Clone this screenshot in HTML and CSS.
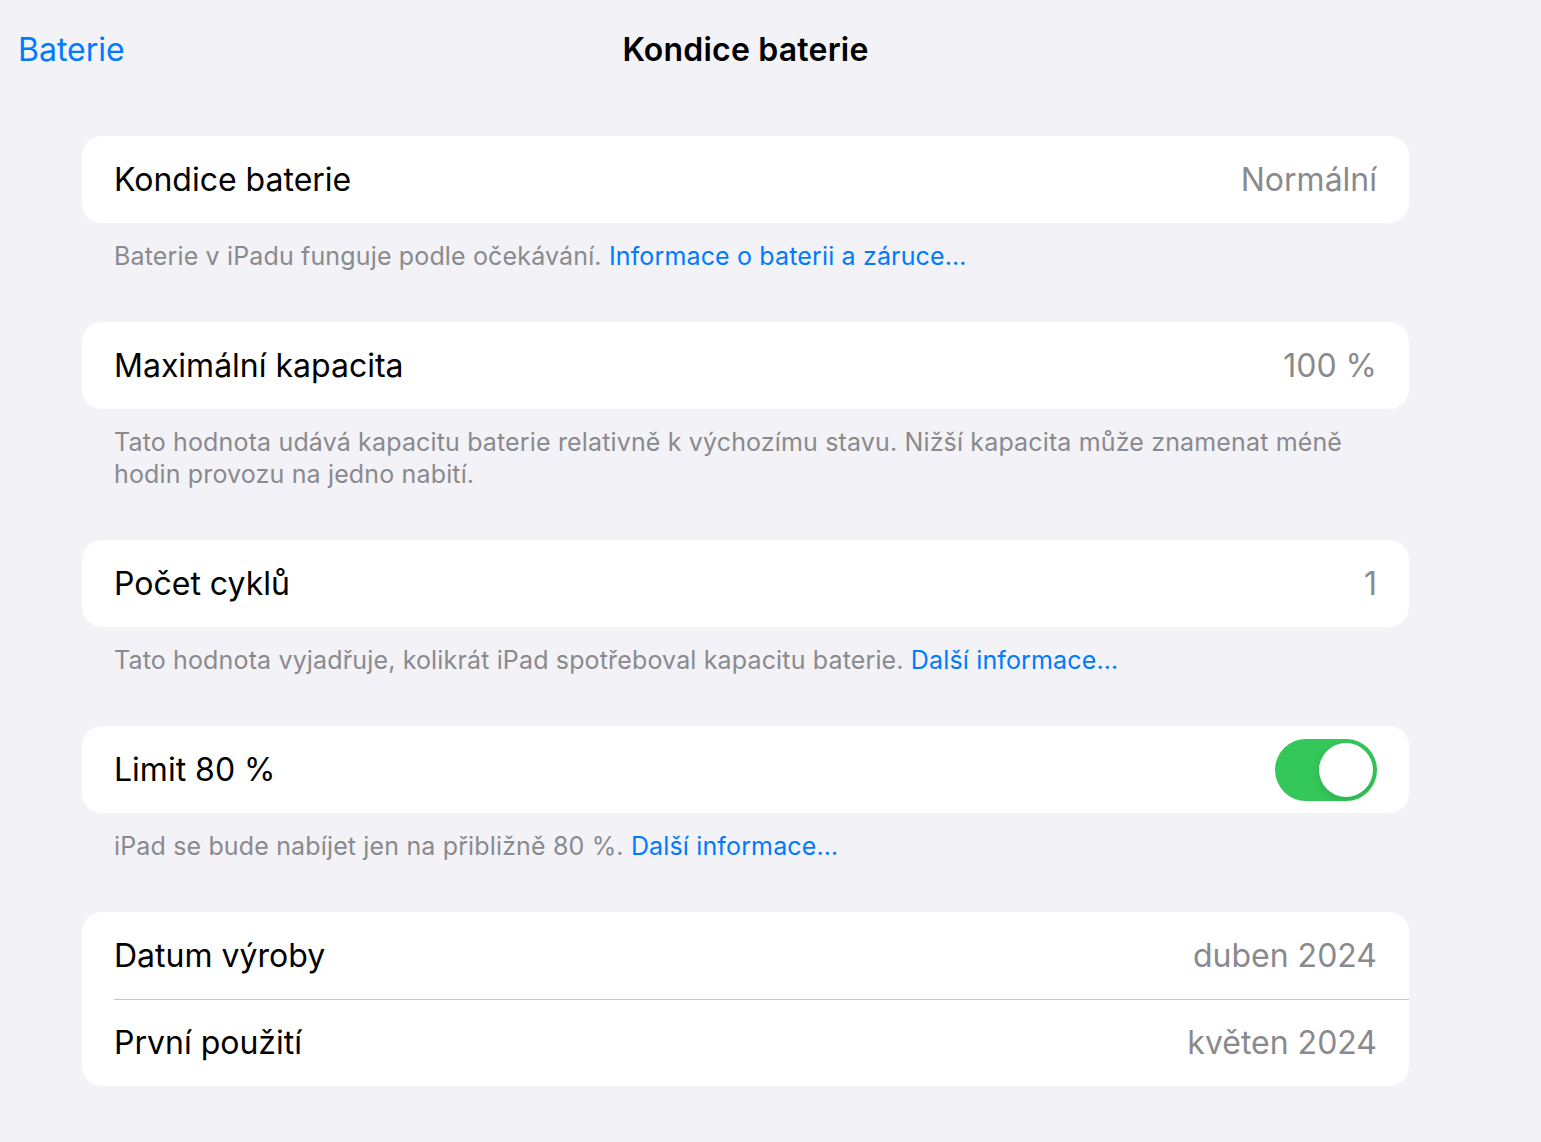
FILE: index.html
```html
<!DOCTYPE html>
<html lang="cs">
<head>
<meta charset="UTF-8">
<meta name="viewport" content="width=device-width, initial-scale=1.0">
<title>Kondice baterie</title>
<link rel="stylesheet" href="styles.css">
</head>
<body>

<div class="navBar">
    <a class="backLink" href="#">Baterie</a>
    <h1 class="navTitle">Kondice baterie</h1>
</div>

<div class="content">
    <div class="card">
        <div class="row">
            <span class="label">Kondice baterie</span>
            <span class="value">Normální</span>
        </div>
    </div>
    <p class="footer">Baterie v iPadu funguje podle očekávání. <a href="#">Informace o baterii a záruce…</a></p>

    <div class="card">
        <div class="row">
            <span class="label">Maximální kapacita</span>
            <span class="value">100 %</span>
        </div>
    </div>
    <p class="footer">Tato hodnota udává kapacitu baterie relativně k výchozímu stavu. Nižší kapacita může znamenat méně hodin provozu na jedno nabití.</p>

    <div class="card">
        <div class="row">
            <span class="label">Počet cyklů</span>
            <span class="value">1</span>
        </div>
    </div>
    <p class="footer">Tato hodnota vyjadřuje, kolikrát iPad spotřeboval kapacitu baterie. <a href="#">Další informace…</a></p>

    <div class="card">
        <div class="row">
            <span class="label">Limit 80 %</span>
            <div class="toggle on"><div class="knob"></div></div>
        </div>
    </div>
    <p class="footer">iPad se bude nabíjet jen na přibližně 80 %. <a href="#">Další informace…</a></p>

    <div class="card">
        <div class="row">
            <span class="label">Datum výroby</span>
            <span class="value">duben 2024</span>
        </div>
        <div class="row">
            <span class="label">První použití</span>
            <span class="value">květen 2024</span>
        </div>
    </div>
</div>

</body>
</html>
```

FILE: styles.css
```css
body {
    margin: 0;
    background-color: #f2f2f7;
    font-family: Inter, "Noto Sans", "Liberation Sans", sans-serif;
    color: #000;
    height: 1142px;
}

a {
    color: #007aff;
    text-decoration: none;
}

.navBar {
    position: relative;
    height: 100px;
    width: 1492px;
}

.backLink {
    position: absolute;
    left: 18px;
    top: 31px;
    font-size: 32px;
    line-height: 38px;
}

.navTitle {
    margin: 0;
    padding-top: 31px;
    padding-left: 82px;
    width: 1327px;
    text-align: center;
    font-size: 32px;
    font-weight: 600;
    letter-spacing: 0.2px;
    line-height: 38px;
}

.content {
    margin-left: 82px;
    width: 1327px;
    padding-top: 36px;
}

.card {
    background: #fff;
    border-radius: 20px;
    overflow: hidden;
}

.row {
    display: flex;
    justify-content: space-between;
    align-items: center;
    height: 87px;
    padding: 0 32px;
    position: relative;
}

.row + .row::before {
    content: "";
    position: absolute;
    top: 0;
    left: 32px;
    right: 0;
    height: 1px;
    background: #c6c6c8;
}

.label {
    font-size: 32px;
}

.value {
    font-size: 32px;
    color: #8a8a8e;
}

.footer {
    margin: 0;
    padding: 17px 32px 50px;
    font-size: 25px;
    line-height: 32px;
    letter-spacing: 0.15px;
    color: #8a8a8e;
}

.toggle {
    width: 102px;
    height: 62px;
    border-radius: 31px;
    background: #34c759;
    position: relative;
}

.knob {
    position: absolute;
    top: 4px;
    right: 4px;
    width: 54px;
    height: 54px;
    border-radius: 50%;
    background: #fff;
    box-shadow: 0 3px 8px rgba(0, 0, 0, 0.12);
}
```
